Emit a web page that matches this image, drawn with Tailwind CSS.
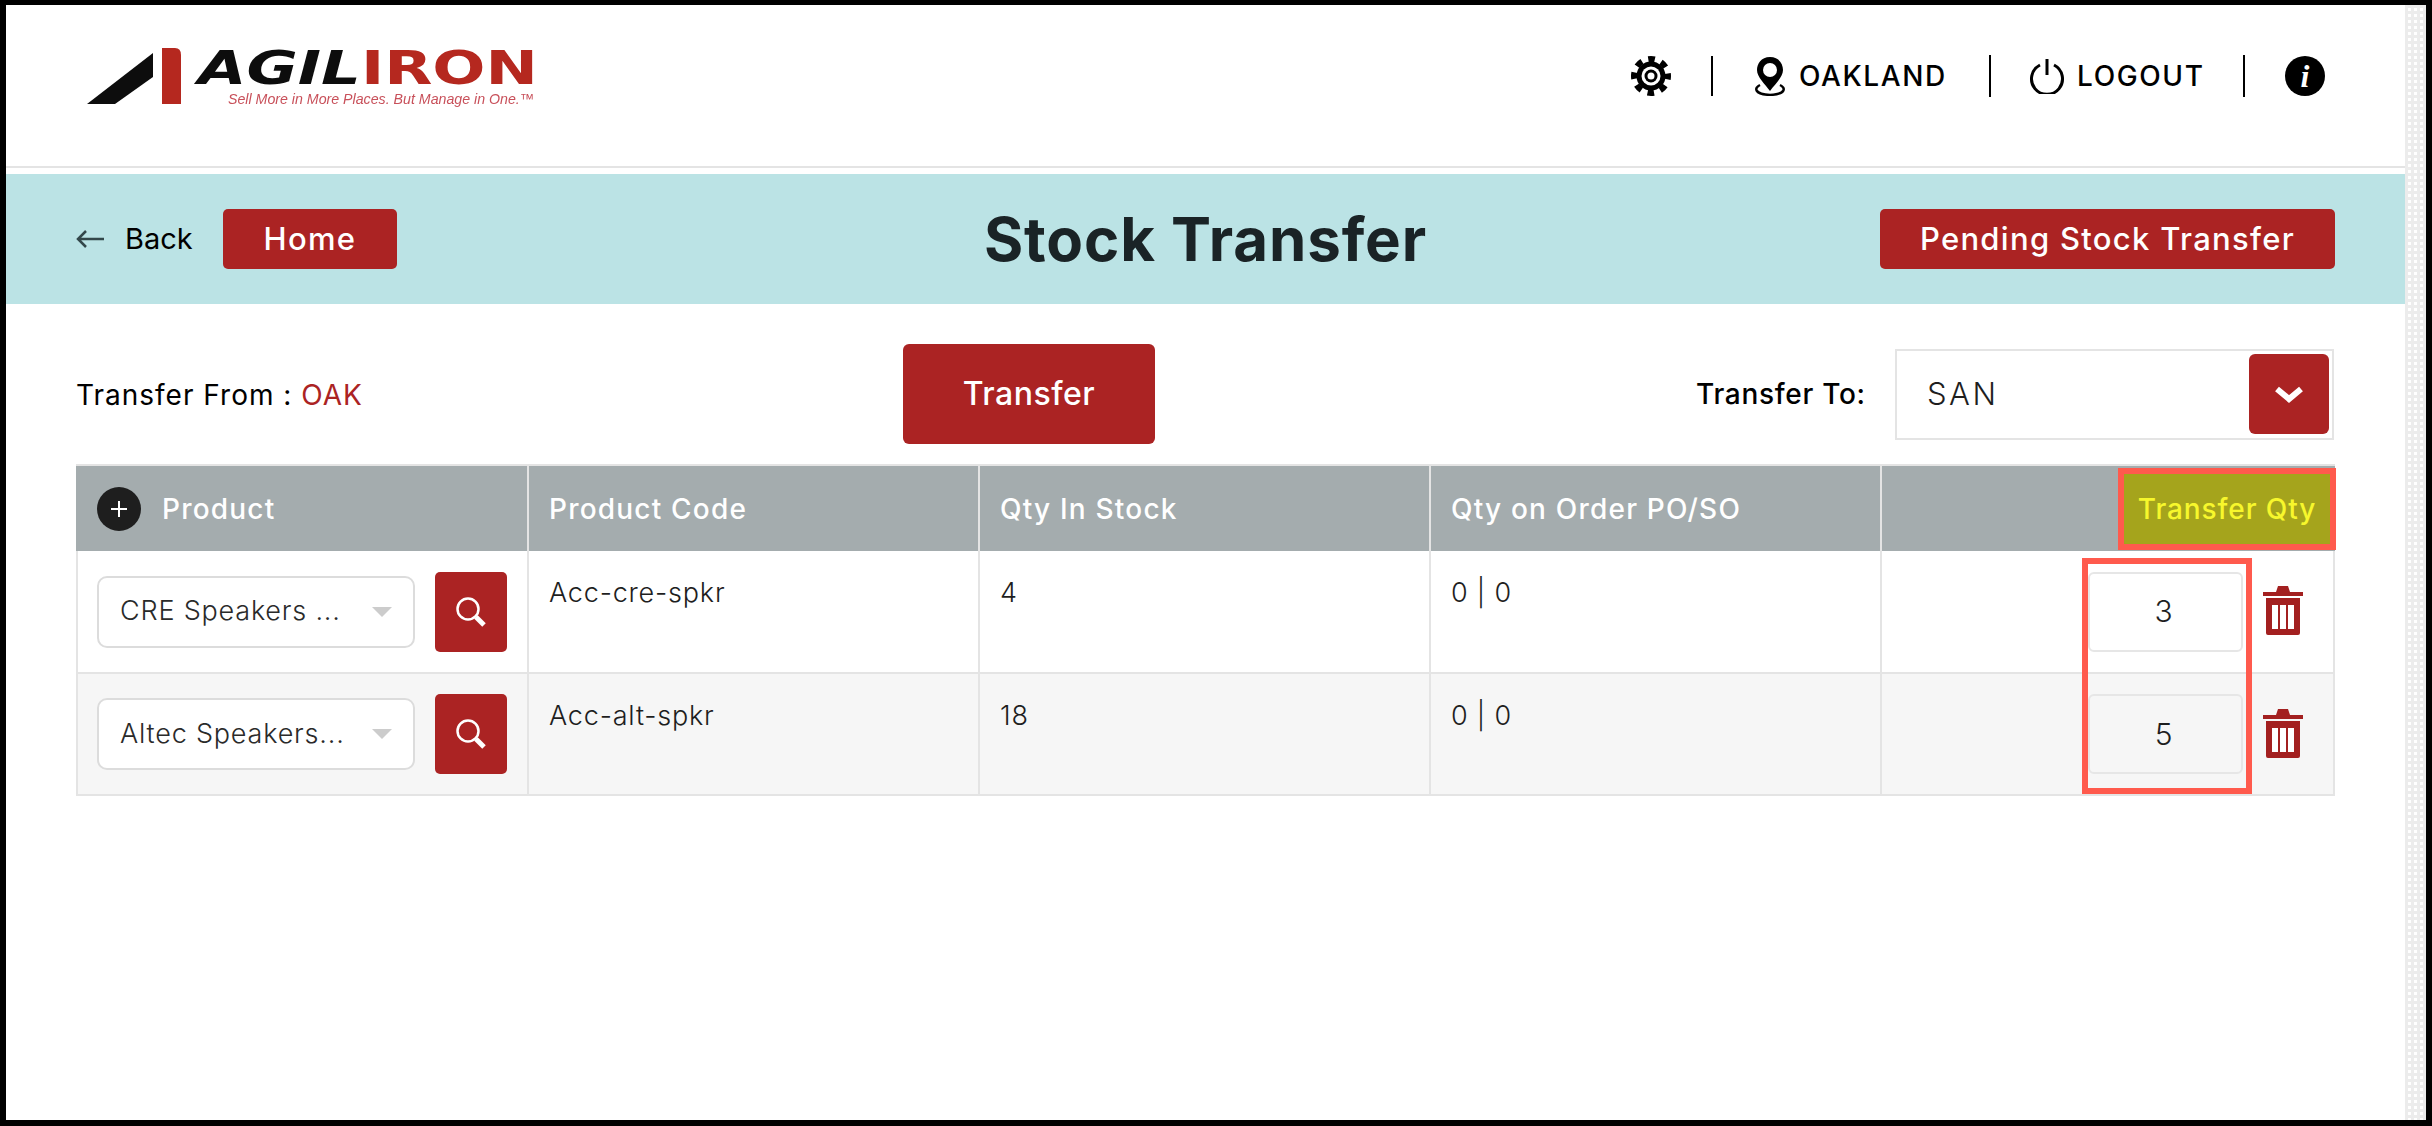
<!DOCTYPE html>
<html lang="en">
<head>
<meta charset="utf-8">
<title>Stock Transfer</title>
<script src="https://cdn.jsdelivr.net/npm/@tailwindcss/browser@4"></script>
</head>
<body class="bg-black font-['Inter',sans-serif] text-[#1e1e1e]">
<div class="w-[2432px] h-[1126px] bg-black pl-[6px] pt-[5px] pr-[6px] pb-[6px] overflow-hidden">
  <div class="relative flex h-full bg-white">
    <main class="w-[2399px] flex flex-col">
      <header class="h-[163px] shrink-0 border-b-2 border-[#e4e4e4] flex items-start justify-between">
        <div class="relative w-[480px] h-[100px] ml-[81px] mt-[42px]">
          <svg class="absolute left-0 top-0" width="96" height="58" viewBox="0 0 96 58"><path d="M0 57 L66 6 L66 30 L28 57Z" fill="#0d0d0d"/><path d="M75 1 H88 Q94 1 94 8 V57 H75Z" fill="#b5281f"/></svg>
          <div class="absolute left-[111px] top-[-6px] flex origin-left scale-x-[1.36] font-['DejaVu_Sans',sans-serif] font-bold text-[46px] leading-[54px] whitespace-nowrap"><span class="text-[#0d0d0d] italic">AGIL</span><span class="text-[#b5281f]">IRON</span></div>
          <div class="absolute left-[141px] top-[43px] font-['Liberation_Sans',sans-serif] italic text-[14.2px] leading-[18px] text-[#c8505a] whitespace-nowrap blur-[0.4px]">Sell More in More Places. But Manage in One.™</div>
        </div>
        <nav class="flex items-center h-[42px] mt-[50px] mr-[80px] text-[28px] font-medium text-black tracking-[1.6px]">
          <svg class="ml-[1px]" width="42" height="42" viewBox="0 0 42 42"><circle cx="21" cy="21" r="17" fill="none" stroke="#000" stroke-width="6" stroke-dasharray="6.7 6.65" stroke-dashoffset="3.3"/><circle cx="21" cy="21" r="14.5" fill="#000"/><circle cx="21" cy="21" r="9.5" fill="#fff"/><circle cx="21" cy="21" r="6.5" fill="#000"/><circle cx="21" cy="21" r="3.5" fill="#fff"/></svg>
          <span class="w-[2px] h-[40px] bg-black ml-[39px] mr-[40px]"></span>
          <svg width="34" height="40" viewBox="0 0 34 40"><path d="M17 1 C8 1 4 8 4 14 C4 21 12 28 17 35 C22 28 30 21 30 14 C30 8 26 1 17 1Z" fill="#000"/><circle cx="17" cy="14" r="7" fill="#fff"/><path d="M7 29 C1 32 1 38 17 39 C33 38 33 32 27 29" fill="none" stroke="#000" stroke-width="2.5"/></svg>
          <span class="ml-[12px] w-[152px]">OAKLAND</span>
          <span class="w-[2px] h-[42px] bg-black ml-[38px] mr-[38px]"></span>
          <svg width="36" height="36" viewBox="0 0 36 36" fill="none" stroke="#000" stroke-width="3"><path d="M11 7 A15.5 15.5 0 1 0 25 7"/><path d="M18 1 V17"/></svg>
          <span class="ml-[12px] w-[128px]">LOGOUT</span>
          <span class="w-[2px] h-[42px] bg-black ml-[38px] mr-[40px]"></span>
          <span class="w-[40px] h-[40px] rounded-full bg-black text-white flex items-center justify-center font-['Liberation_Serif',serif] italic font-bold text-[32px] leading-none tracking-normal">i</span>
        </nav>
      </header>
      <section class="mt-[6px] h-[130px] shrink-0 bg-[#bbe3e5] grid grid-cols-[1fr_auto_1fr] items-center pl-[70px] pr-[70px]">
        <div class="flex items-center">
          <svg width="28" height="20" viewBox="0 0 28 20" fill="none" stroke="#33474a" stroke-width="2.5"><path d="M28 10 H2 M10 2 L2 10 L10 18"/></svg>
          <span class="ml-[21px] w-[70px] text-[29px] text-black">Back</span>
          <span class="ml-[28px] w-[174px] h-[60px] rounded-[5px] bg-[#ab2323] text-white text-[31px] font-medium flex items-center justify-center tracking-[1.3px]">Home</span>
        </div>
        <h1 class="text-[60px] font-bold text-[#1a2326] tracking-[0.9px] leading-none">Stock Transfer</h1>
        <div class="flex justify-end">
          <span class="w-[455px] h-[60px] rounded-[5px] bg-[#ab2323] text-white text-[31px] font-medium flex items-center justify-center tracking-[1.3px]">Pending Stock Transfer</span>
        </div>
      </section>
      <section class="mt-[40px] h-[100px] shrink-0 flex items-center pl-[70px]">
        <div class="w-[827px] pt-[1px] text-[28px] text-black tracking-[1px]">Transfer From : <span class="text-[#ab2323]">OAK</span></div>
        <span class="w-[252px] h-[100px] rounded-[6px] bg-[#ab2323] text-white text-[32px] font-medium flex items-center justify-center tracking-[0.5px]">Transfer</span>
        <span class="ml-[541px] w-[199px] text-[28px] font-medium text-black tracking-[0.7px]">Transfer To:</span>
        <div class="w-[439px] h-[91px] border-2 border-[#e4e4e4] flex items-center justify-between pl-[30px] pr-[3px]">
          <span class="text-[31px] tracking-[2.5px] font-[350]">SAN</span>
          <span class="w-[80px] h-[80px] rounded-[6px] bg-[#ab2323] flex items-center justify-center">
            <svg width="28" height="17" viewBox="0 0 28 17" fill="none" stroke="#fff" stroke-width="6"><path d="M2 3 L14 13 L26 3"/></svg>
          </span>
        </div>
      </section>
      <section class="relative mt-[20px] ml-[70px] w-[2259px] text-[27px] font-[350] tracking-[0.8px]">
        <div class="grid grid-cols-[451px_451px_451px_451px_455px] h-[87px] bg-[#a4acae] border-t-2 border-[#e4e4e4] text-white text-[28px] font-medium tracking-[1.2px]">
          <div class="flex items-center pl-[21px]">
            <span class="w-[44px] h-[44px] rounded-full bg-[#1e1e1e] flex items-center justify-center">
              <svg width="16" height="16" viewBox="0 0 16 16" stroke="#fff" stroke-width="2"><path d="M8 0 V16 M0 8 H16"/></svg>
            </span>
            <span class="ml-[21px]">Product</span>
          </div>
          <div class="flex items-center pl-[20px] border-l-2 border-[#e4e4e4]">Product Code</div>
          <div class="flex items-center pl-[20px] border-l-2 border-[#e4e4e4]">Qty In Stock</div>
          <div class="flex items-center pl-[20px] border-l-2 border-[#e4e4e4]">Qty on Order PO/SO</div>
          <div class="border-l-2 border-[#e4e4e4]"></div>
        </div>
        <div class="grid grid-cols-[449px_451px_451px_451px_453px] h-[123px] border-b-2 border-x-2 border-[#e4e4e4] bg-white">
          <div class="flex items-center pl-[19px]">
            <div class="w-[318px] h-[72px] rounded-[10px] border-2 border-[#dcdcdc] bg-white flex items-center justify-between pl-[21px] pr-[21px]"><span class="text-[#2a2a2a]">CRE Speakers ...</span><span class="w-0 h-0 border-x-[10px] border-x-transparent border-t-[10px] border-t-[#cccccc]"></span></div>
            <span class="ml-[20px] w-[72px] h-[80px] rounded-[5px] bg-[#ab2323] flex items-center justify-center">
              <svg width="32" height="30" viewBox="0 0 32 30" fill="none" stroke="#fff"><circle cx="13" cy="12" r="10.5" stroke-width="2.5"/><path d="M21 20 L29 28" stroke-width="5"/></svg>
            </span>
          </div>
          <div class="pl-[20px] pt-[22px] border-l-2 border-[#e4e4e4]">Acc-cre-spkr</div>
          <div class="pl-[20px] pt-[22px] border-l-2 border-[#e4e4e4]">4</div>
          <div class="pl-[20px] pt-[22px] border-l-2 border-[#e4e4e4]">0 | 0</div>
          <div class="flex items-center border-l-2 border-[#e4e4e4]">
            <div class="ml-[206px] w-[155px] h-[80px] rounded-[6px] border-2 border-[#e6e6e6] flex items-center justify-center pr-[3px] text-[30px]">3</div>
            <svg class="ml-[20px] -mt-[3px]" width="40" height="50" viewBox="0 0 40 50"><path d="M0 7 H13 L15 1 H25 L27 7 H40 V11 H0Z M3 13 H37 V48 Q37 50 35 50 H5 Q3 50 3 48Z" fill="#a32020"/><path d="M9 20 H15 V44 H9Z M17 20 H23 V44 H17Z M25 20 H31 V44 H25Z" fill="#fff"/></svg>
          </div>
        </div>
        <div class="grid grid-cols-[449px_451px_451px_451px_453px] h-[122px] border-b-2 border-x-2 border-[#e4e4e4] bg-[#f6f6f6]">
          <div class="flex items-center pl-[19px]">
            <div class="w-[318px] h-[72px] rounded-[10px] border-2 border-[#dcdcdc] bg-white flex items-center justify-between pl-[21px] pr-[21px]"><span class="text-[#2a2a2a]">Altec Speakers...</span><span class="w-0 h-0 border-x-[10px] border-x-transparent border-t-[10px] border-t-[#cccccc]"></span></div>
            <span class="ml-[20px] w-[72px] h-[80px] rounded-[5px] bg-[#ab2323] flex items-center justify-center">
              <svg width="32" height="30" viewBox="0 0 32 30" fill="none" stroke="#fff"><circle cx="13" cy="12" r="10.5" stroke-width="2.5"/><path d="M21 20 L29 28" stroke-width="5"/></svg>
            </span>
          </div>
          <div class="pl-[20px] pt-[22px] border-l-2 border-[#e4e4e4]">Acc-alt-spkr</div>
          <div class="pl-[20px] pt-[22px] border-l-2 border-[#e4e4e4]">18</div>
          <div class="pl-[20px] pt-[22px] border-l-2 border-[#e4e4e4]">0 | 0</div>
          <div class="flex items-center border-l-2 border-[#e4e4e4]">
            <div class="ml-[206px] w-[155px] h-[80px] rounded-[6px] border-2 border-[#e6e6e6] flex items-center justify-center pr-[3px] text-[30px]">5</div>
            <svg class="ml-[20px] -mt-[3px]" width="40" height="50" viewBox="0 0 40 50"><path d="M0 7 H13 L15 1 H25 L27 7 H40 V11 H0Z M3 13 H37 V48 Q37 50 35 50 H5 Q3 50 3 48Z" fill="#a32020"/><path d="M9 20 H15 V44 H9Z M17 20 H23 V44 H17Z M25 20 H31 V44 H25Z" fill="#fff"/></svg>
          </div>
        </div>
        <div class="absolute left-[2042px] top-[4px] w-[218px] h-[82px] border-[6px] border-[#ff5a4d] bg-[#a5a41c] text-[#f7f72c] text-[28px] font-medium tracking-[0.9px] flex items-center justify-center">Transfer Qty</div>
        <div class="absolute left-[2006px] top-[94px] w-[170px] h-[236px] border-[6px] border-[#ff5a4d]"></div>
      </section>
    </main>
    <div class="w-[21px] bg-[linear-gradient(90deg,#ececec_50%,transparent_50%),linear-gradient(#ececec_50%,transparent_50%)] bg-[length:6px_6px]"></div>
  </div>
</div>
</body>
</html>
